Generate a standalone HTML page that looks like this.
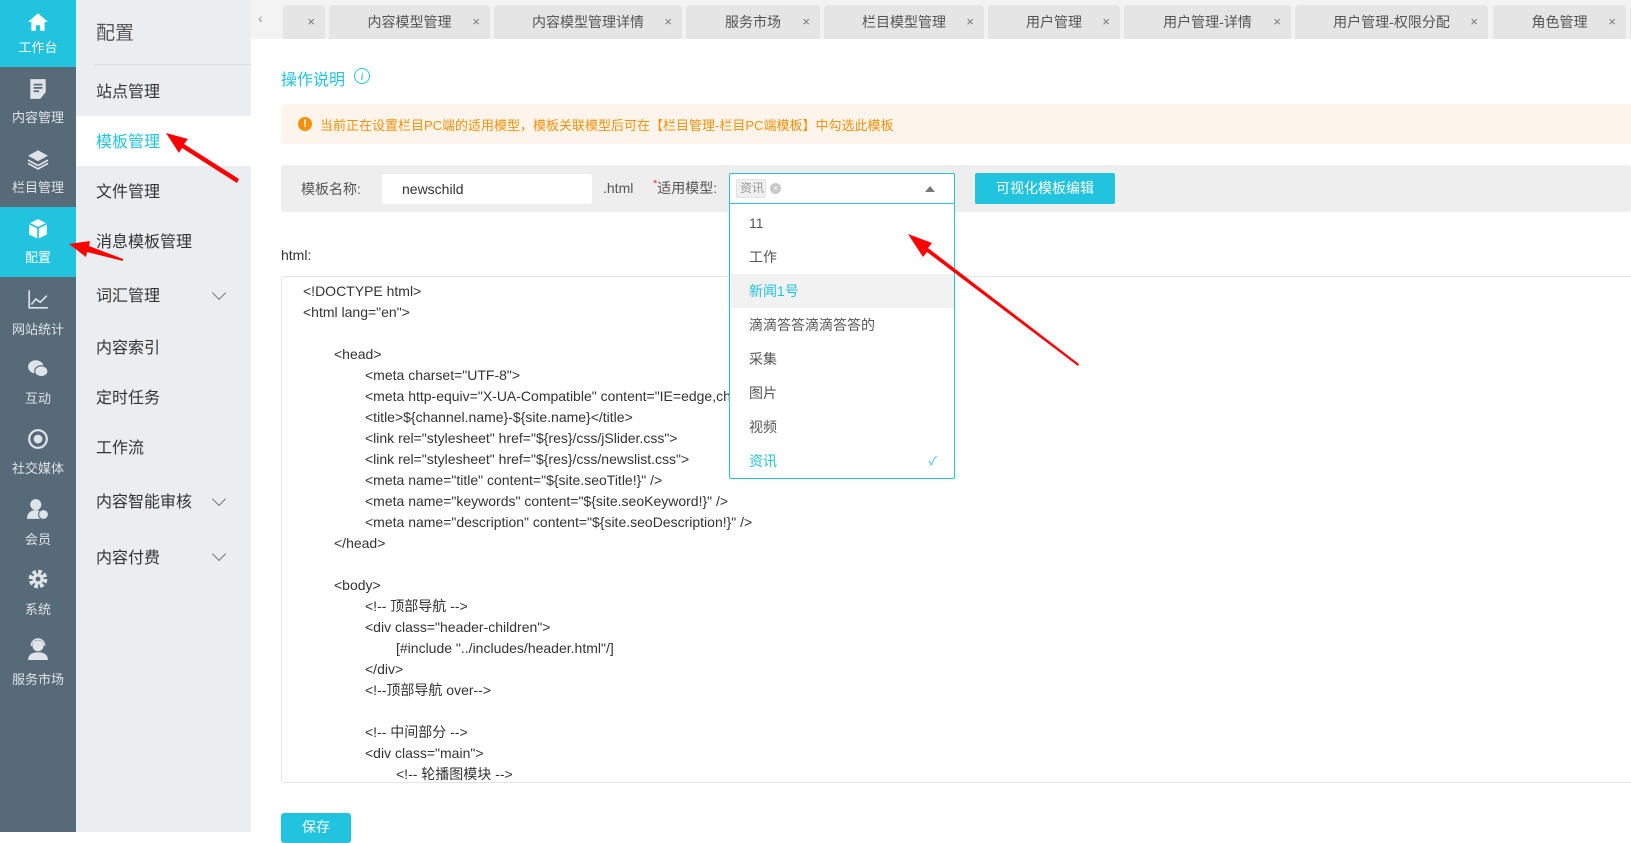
<!DOCTYPE html>
<html><head><meta charset="utf-8"><style>
*{margin:0;padding:0;box-sizing:border-box}
body{width:1631px;height:832px;overflow:hidden;position:relative;background:#fff;font-family:"Liberation Sans","Noto Sans CJK SC",sans-serif;color:#333}
.abs{position:absolute}
#nav{left:0;top:0;width:76px;height:832px;background:#566a77}
.ni{position:absolute;left:0;width:76px;height:70px;color:#dfe4e8;font-size:13px;text-align:center}
.ni.on{background:#22c3de;color:#fff}
.ni svg{position:absolute;left:27px;top:11px;width:22px;height:22px}
.ni span{position:absolute;left:0;right:0;top:38px}
#sub{left:76px;top:0;width:175px;height:832px;background:#ebeef1}
.si{position:absolute;left:20px;font-size:16px;color:#333}
.chev{position:absolute;left:138px;width:10px;height:10px;border-right:1px solid #777;border-bottom:1px solid #777;transform:rotate(45deg)}
#tabs{left:251px;top:0;width:1380px;height:39px;background:#f3f3f3}
.tab{position:absolute;top:5px;height:34px;background:#e5e5e5;border-radius:4px 4px 0 0;font-size:14px;color:#555;line-height:34px;text-align:center}
.tab i{position:absolute;right:10px;top:0;font-style:normal;font-size:13px;color:#777}
.code{position:absolute;font-size:14px;color:#333;white-space:pre;line-height:21px}
.dd{position:absolute;left:729px;width:226px;height:34px;font-size:14px;line-height:34px;padding-left:20px;color:#555}
</style></head><body>
<div id="nav" class="abs">
 <div class="ni on" style="top:0;height:67px"><svg viewBox="0 0 20 20"><path d="M10 2L1 10h3v8h4v-5h4v5h4v-8h3z" fill="#fff"/></svg><span style="top:37px">工作台</span></div>
 <div class="ni" style="top:67px"><svg viewBox="0 0 20 20"><path d="M3 1h14v12l-5 6H3z" fill="#dfe4e8"/><path d="M6 6h8M6 9h8M6 12h5" stroke="#566a77" stroke-width="1.6"/></svg><span style="top:40px">内容管理</span></div>
 <div class="ni" style="top:137px"><svg viewBox="0 0 20 20"><path d="M10 2l9 5-9 5-9-5z" fill="#dfe4e8"/><path d="M1 11l9 5 9-5M1 14l9 5 9-5" stroke="#dfe4e8" fill="none" stroke-width="1.5"/></svg><span style="top:40px">栏目管理</span></div>
 <div class="ni on" style="top:207px"><svg viewBox="0 0 20 20"><path d="M10 1l8 4v10l-8 4-8-4V5z" fill="#fff"/><path d="M2 5l8 4 8-4M10 9v10" stroke="#22c3de" stroke-width="1.5" fill="none"/></svg><span style="top:40px">配置</span></div>
 <div class="ni" style="top:277px"><svg viewBox="0 0 20 20"><path d="M2 2v16h17M4 15l4-5 4 3 6-6" stroke="#dfe4e8" fill="none" stroke-width="1.5"/></svg><span style="top:42px">网站统计</span></div>
 <div class="ni" style="top:347px"><svg viewBox="0 0 20 20"><ellipse cx="8" cy="8" rx="7" ry="6" fill="#dfe4e8"/><ellipse cx="13" cy="12" rx="6" ry="5" fill="#dfe4e8" stroke="#566a77"/></svg><span style="top:41px">互动</span></div>
 <div class="ni" style="top:417px"><svg viewBox="0 0 20 20"><circle cx="10" cy="10" r="8" stroke="#dfe4e8" stroke-width="2" fill="none"/><circle cx="10" cy="10" r="4" fill="#dfe4e8"/></svg><span style="top:41px">社交媒体</span></div>
 <div class="ni" style="top:487px"><svg viewBox="0 0 20 20"><circle cx="8" cy="6" r="5" fill="#dfe4e8"/><path d="M0 19c0-6 4-8 8-8s6 2 6 2v6z" fill="#dfe4e8"/><circle cx="15" cy="15" r="4.5" fill="#dfe4e8" stroke="#566a77"/></svg><span style="top:42px">会员</span></div>
 <div class="ni" style="top:557px"><svg viewBox="0 0 20 20"><circle cx="10" cy="10" r="6" fill="none" stroke="#dfe4e8" stroke-width="5" stroke-dasharray="3 1.7"/><circle cx="10" cy="10" r="5" fill="#dfe4e8"/><circle cx="10" cy="10" r="2.2" fill="#566a77"/></svg><span style="top:42px">系统</span></div>
 <div class="ni" style="top:627px"><svg viewBox="0 0 20 20"><circle cx="10" cy="7" r="5" fill="#dfe4e8"/><path d="M4 7a6 6 0 0112 0" stroke="#dfe4e8" fill="none" stroke-width="1.5"/><path d="M1 20c0-5 4-7 9-7s9 2 9 7z" fill="#dfe4e8"/></svg><span style="top:42px">服务市场</span></div>
</div>
<div id="sub" class="abs">
 <div class="si" style="top:18px;font-size:19px;color:#555">配置</div>
 <div class="abs" style="left:18px;top:64px;width:157px;height:1px;background:#dde1e5"></div>
 <div class="si" style="top:78px">站点管理</div>
 <div class="abs" style="left:0;top:116px;width:175px;height:50px;background:#fff"></div>
 <div class="si" style="top:128px;color:#22c3de">模板管理</div>
 <div class="si" style="top:178px">文件管理</div>
 <div class="si" style="top:228px">消息模板管理</div>
 <div class="si" style="top:282px">词汇管理</div><div class="chev" style="top:288px"></div>
 <div class="si" style="top:334px">内容索引</div>
 <div class="si" style="top:384px">定时任务</div>
 <div class="si" style="top:434px">工作流</div>
 <div class="si" style="top:488px">内容智能审核</div><div class="chev" style="top:494px"></div>
 <div class="si" style="top:544px">内容付费</div><div class="chev" style="top:549px"></div>
</div>
<div id="tabs" class="abs">
 <div class="abs" style="left:7px;top:10px;font-size:14px;color:#999">&lsaquo;</div>
</div>
<div class="tab" style="left:283px;width:42px"><i>×</i></div>
<div class="tab" style="left:329px;width:161px">内容模型管理<i>×</i></div>
<div class="tab" style="left:494px;width:188px">内容模型管理详情<i>×</i></div>
<div class="tab" style="left:686px;width:134px">服务市场<i>×</i></div>
<div class="tab" style="left:824px;width:160px">栏目模型管理<i>×</i></div>
<div class="tab" style="left:988px;width:132px">用户管理<i>×</i></div>
<div class="tab" style="left:1124px;width:167px">用户管理-详情<i>×</i></div>
<div class="tab" style="left:1295px;width:193px">用户管理-权限分配<i>×</i></div>
<div class="tab" style="left:1493px;width:133px">角色管理<i>×</i></div>
<div class="tab" style="left:1630px;width:10px"></div>

<div class="abs" style="left:281px;top:66px;font-size:16px;color:#22c3de">操作说明</div>
<div class="abs" style="left:354px;top:68px;width:16px;height:16px;border:1px solid #22c3de;border-radius:50%;color:#22c3de;font-size:12px;font-style:italic;line-height:14px;text-align:center;font-family:'Liberation Serif',serif">i</div>
<div class="abs" style="left:281px;top:104px;width:1350px;height:40px;background:#fdf5ec;border-radius:3px"></div>
<div class="abs" style="left:298px;top:117px;width:14px;height:14px;border-radius:50%;background:#f7900a;color:#fff;font-size:11px;font-weight:bold;line-height:14px;text-align:center">!</div>
<div class="abs" style="left:320px;top:115px;font-size:13px;color:#f7900a">当前正在设置栏目PC端的适用模型，模板关联模型后可在【栏目管理-栏目PC端模板】中勾选此模板</div>

<div class="abs" style="left:281px;top:165px;width:1350px;height:47px;background:#eeeeee;border-radius:3px"></div>
<div class="abs" style="left:301px;top:179px;font-size:14px;color:#555">模板名称:</div>
<div class="abs" style="left:382px;top:174px;width:210px;height:30px;background:#fff;border-radius:3px;font-size:14px;line-height:30px;padding-left:20px;color:#333">newschild</div>
<div class="abs" style="left:603px;top:180px;font-size:14px;color:#555">.html</div>
<div class="abs" style="left:653px;top:178px;font-size:14px;color:#555"><span style="color:#e33;font-size:11px;vertical-align:top">*</span>适用模型:</div>
<div class="abs" style="left:729px;top:173px;width:226px;height:31px;background:#fff;border:1px solid #22c3de;border-radius:2px 2px 0 0"></div>
<div class="abs" style="left:736px;top:179px;width:30px;height:19px;background:#f0f0f0;border:1px solid #e3e3e3;border-radius:2px;font-size:12px;line-height:17px;color:#999;padding-left:3px">资讯</div>
<div class="abs" style="left:770px;top:183px;width:11px;height:11px;border-radius:50%;background:#c8c8c8;color:#fff;font-size:9px;line-height:11px;text-align:center">×</div>
<div class="abs" style="left:925px;top:186px;width:0;height:0;border-left:5px solid transparent;border-right:5px solid transparent;border-bottom:6px solid #777"></div>
<div class="abs" style="left:975px;top:173px;width:140px;height:31px;background:#22c3de;border-radius:2px;color:#fff;font-size:14px;line-height:31px;text-align:center">可视化模板编辑</div>

<div class="abs" style="left:281px;top:247px;font-size:14px">html:</div>
<div class="abs" style="left:281px;top:276px;width:1360px;height:507px;border:1px solid #e5e5e5;border-radius:3px"></div>
<div class="code" style="left:303px;top:281px">&lt;!DOCTYPE html&gt;
&lt;html lang="en"&gt;</div>
<div class="code" style="left:334px;top:344px">&lt;head&gt;</div>
<div class="code" style="left:365px;top:365px">&lt;meta charset="UTF-8"&gt;
&lt;meta http-equiv="X-UA-Compatible" content="IE=edge,ch
&lt;title&gt;${channel.name}-${site.name}&lt;/title&gt;
&lt;link rel="stylesheet" href="${res}/css/jSlider.css"&gt;
&lt;link rel="stylesheet" href="${res}/css/newslist.css"&gt;
&lt;meta name="title" content="${site.seoTitle!}" /&gt;
&lt;meta name="keywords" content="${site.seoKeyword!}" /&gt;
&lt;meta name="description" content="${site.seoDescription!}" /&gt;</div>
<div class="code" style="left:334px;top:533px">&lt;/head&gt;</div>
<div class="code" style="left:334px;top:575px">&lt;body&gt;</div>
<div class="code" style="left:365px;top:596px">&lt;!-- 顶部导航 --&gt;
&lt;div class="header-children"&gt;</div>
<div class="code" style="left:396px;top:638px">[#include "../includes/header.html"/]</div>
<div class="code" style="left:365px;top:659px">&lt;/div&gt;
&lt;!--顶部导航 over--&gt;</div>
<div class="code" style="left:365px;top:722px">&lt;!-- 中间部分 --&gt;
&lt;div class="main"&gt;</div>
<div class="code" style="left:396px;top:764px;height:18px;overflow:hidden">&lt;!-- 轮播图模块 --&gt;</div>
<div class="abs" style="left:281px;top:813px;width:70px;height:30px;background:#22c3de;border-radius:3px;color:#fff;font-size:14px;line-height:28px;text-align:center">保存</div>

<div class="abs" style="left:729px;top:204px;width:226px;height:275px;background:#fff;border:1px solid #22c3de;border-top:none;border-radius:0 0 2px 2px"></div>
<div class="dd" style="top:206px">11</div>
<div class="dd" style="top:240px">工作</div>
<div class="dd" style="top:274px;background:#f2f2f2;color:#22c3de;left:730px;width:224px;padding-left:19px">新闻1号</div>
<div class="dd" style="top:308px">滴滴答答滴滴答答的</div>
<div class="dd" style="top:342px">采集</div>
<div class="dd" style="top:376px">图片</div>
<div class="dd" style="top:410px">视频</div>
<div class="dd" style="top:444px;color:#22c3de">资讯<span style="position:absolute;right:18px;font-size:12px">✓</span></div>

<svg class="abs" style="left:0;top:0" width="1631" height="832">
 <g fill="#f00">
  <path d="M237 183L182 148l-3 5-13-20 22 6-4 5 55 35z"/>
  <path d="M123 261L87 252l-1 5-17-13 21-3-1 5 34 13z"/>
  <path d="M1078 366L927 252l-4 5-15-23 24 9-4 5 151 116z"/>
 </g>
</svg>
</body></html>
